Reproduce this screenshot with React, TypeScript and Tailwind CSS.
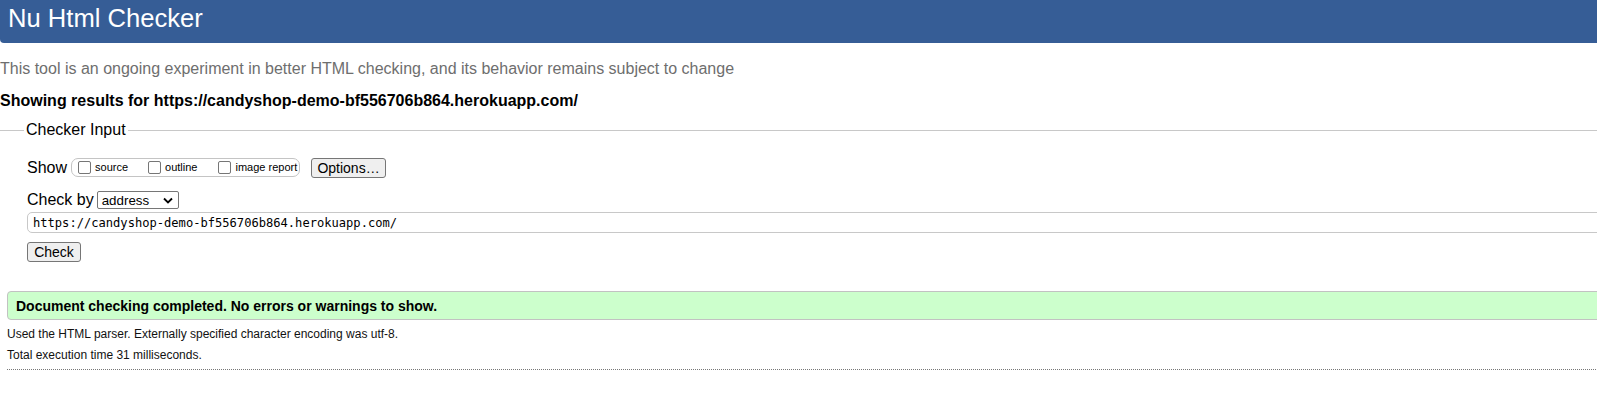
import React from "react"

const sans = { fontFamily: '"Liberation Sans", Arial, sans-serif' }

function Box({ label }: { label: string }) {
  return (
    <span className="flex items-center">
      <span className="inline-block w-[13px] h-[13px] border border-[#767676] rounded-[2px] bg-white mr-[4px]" />
      <span className="text-[11px] leading-[13px] text-black">{label}</span>
    </span>
  )
}

export default function App() {
  return (
    <div className="w-full overflow-hidden bg-white text-black font-['Liberation_Sans',Arial,sans-serif]" style={sans}>
      <div className="w-[1620px] h-[403px]">
        {/* header */}
        <header className="h-[43px] bg-[#365d96] rounded-bl-[4px] pl-[8px] pt-[4px]">
          <h1 className="text-[25.6px] leading-[29px] text-white font-normal">Nu Html Checker</h1>
        </header>

        <p className="mt-[17px] text-[16px] leading-[18px] text-[#6e6e6e]">
          This tool is an ongoing experiment in better HTML checking, and its behavior remains subject to change
        </p>
        <p className="mt-[14px] text-[16px] leading-[18px] font-bold">
          Showing results for https://candyshop-demo-bf556706b864.herokuapp.com/
        </p>

        {/* checker input */}
        <div className="mt-[11px] flex items-center h-[18px]">
          <div className="w-[24px] h-px bg-[#c8c8c8]" />
          <span className="px-[2px] text-[16px] leading-[18px]">Checker Input</span>
          <div className="flex-1 h-px bg-[#c8c8c8]" />
        </div>

        <div className="pl-[27px]">
          <div className="mt-[18px] flex items-center h-[21px]">
            <span className="text-[16px] leading-[18px] mr-[4px]">Show</span>
            <div className="flex items-center h-[19px] w-[229px] border border-[#c4c4c4] rounded-[7px] pl-[6px]">
              <Box label="source" />
              <span className="ml-[20px]"><Box label="outline" /></span>
              <span className="ml-[21px]"><Box label="image report" /></span>
            </div>
            <button className="ml-[11px] h-[20px] w-[75px] bg-[#efefef] border border-[#767676] rounded-[3px] text-[14px] leading-[16px] text-black">
              Options…
            </button>
          </div>

          <div className="mt-[13px] flex items-center h-[18px]">
            <span className="text-[16px] leading-[18px] mr-[3px]">Check by</span>
            <div className="flex items-center justify-between h-[18px] w-[82px] border border-[#767676] rounded-[2px] bg-white pl-[4px] pr-[4px]">
              <span className="text-[13.33px] leading-[15px]">address</span>
              <svg width="10" height="7" viewBox="0 0 10 7" className="mr-[1px]">
                <path d="M1 1.5 L5 5.5 L9 1.5" fill="none" stroke="#000" strokeWidth="1.8" />
              </svg>
            </div>
          </div>

          <div className="mt-[3px] h-[21px] border border-[#c8c8c8] rounded-[5px] flex items-center pl-[5px]">
            <span className="text-[12.1px] leading-[14px]" style={{ fontFamily: '"DejaVu Sans Mono", "Liberation Mono", monospace' }}>
              https://candyshop-demo-bf556706b864.herokuapp.com/
            </span>
          </div>

          <button className="mt-[9px] h-[20px] w-[54px] bg-[#efefef] border border-[#767676] rounded-[3px] text-[14px] leading-[16px] text-black">
            Check
          </button>
        </div>

        {/* results */}
        <div className="ml-[7px] mt-[27px] border border-[#c2c2c2] rounded-[4px] bg-[#ccffcc] pl-[8px] pt-[6px] pb-[5px]">
          <p className="text-[14px] leading-[16px] font-bold">Document checking completed. No errors or warnings to show.</p>
        </div>
        <p className="ml-[7px] mt-[7px] text-[12px] leading-[14px] text-[#111]">
          Used the HTML parser. Externally specified character encoding was utf-8.
        </p>
        <p className="ml-[7px] mt-[7px] text-[12px] leading-[14px] text-[#111]">Total execution time 31 milliseconds.</p>
        <div className="ml-[7px] mt-[7px] border-t border-dotted border-[#777]" />
      </div>
    </div>
  )
}
